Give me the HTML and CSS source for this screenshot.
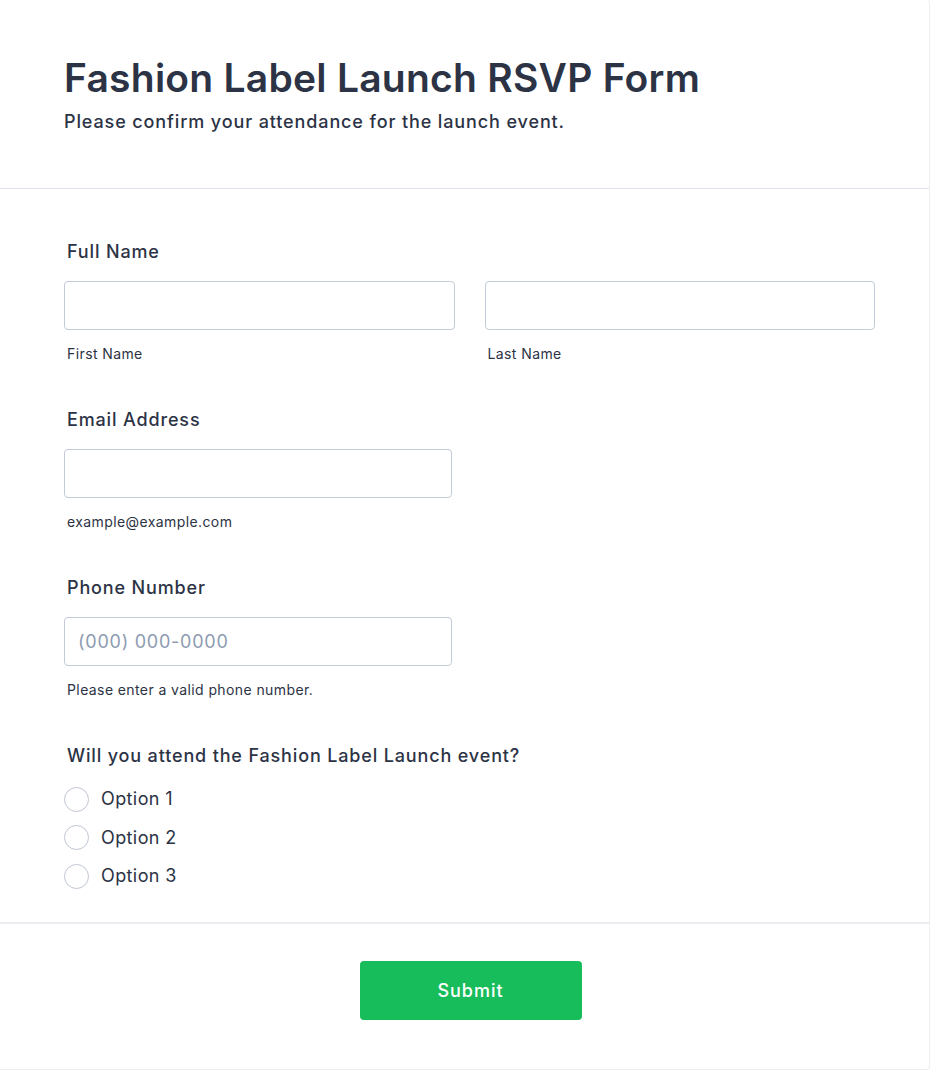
FILE: index.html
```html
<!DOCTYPE html>
<html lang="en">
<head>
<meta charset="utf-8">
<title>Fashion Label Launch RSVP Form</title>
<link rel="stylesheet" href="styles.css">
</head>
<body>
<div class="card">
  <header class="header">
    <h1 class="title">Fashion Label Launch RSVP Form</h1>
    <p class="subtitle">Please confirm your attendance for the launch event.</p>
  </header>
  <form class="form">
    <div class="field">
      <label class="label">Full Name</label>
      <div class="name-row">
        <div class="sub-field">
          <input class="input" type="text">
          <span class="sublabel">First Name</span>
        </div>
        <div class="sub-field">
          <input class="input" type="text">
          <span class="sublabel">Last Name</span>
        </div>
      </div>
    </div>
    <div class="field">
      <label class="label">Email Address</label>
      <div class="sub-field half">
        <input class="input" type="email">
        <span class="sublabel">example@example.com</span>
      </div>
    </div>
    <div class="field">
      <label class="label">Phone Number</label>
      <div class="sub-field half">
        <input class="input" type="tel" placeholder="(000) 000-0000">
        <span class="sublabel">Please enter a valid phone number.</span>
      </div>
    </div>
    <div class="field">
      <label class="label">Will you attend the Fashion Label Launch event?</label>
      <div class="options">
        <label class="option"><span class="radio"></span><span>Option 1</span></label>
        <label class="option"><span class="radio"></span><span>Option 2</span></label>
        <label class="option"><span class="radio"></span><span>Option 3</span></label>
      </div>
    </div>
  </form>
  <footer class="footer">
    <button class="submit" type="button">Submit</button>
  </footer>
</div>
</body>
</html>
```
FILE: styles.css
```css
* { box-sizing: border-box; }
html, body { margin: 0; padding: 0; background: #ffffff; }
body {
  font-family: Inter, "Noto Sans", sans-serif;
  color: #2c3345;
}
.card {
  width: 930px;
  height: 1070px;
  border-right: 1px solid #ededf2;
  border-bottom: 1px solid #ededf2;
  border-top-right-radius: 4px;
  border-bottom-right-radius: 4px;
  display: flex;
  flex-direction: column;
}
.header {
  padding: 54px 64px 54px;
  border-bottom: 1px solid #e1e2ec;
}
.title {
  margin: 0;
  font-size: 39px;
  line-height: 48px;
  font-weight: 600;
  letter-spacing: 0.25px;
  color: #2c3345;
}
.subtitle {
  margin: 8px 0 0;
  font-size: 18px;
  line-height: 24px;
  font-weight: 500;
  letter-spacing: 0.88px;
  color: #2c3345;
}
.form {
  padding: 51px 54px 0 64px;
  display: flex;
  flex-direction: column;
  gap: 45px;
}
.field { display: flex; flex-direction: column; }
.label {
  font-size: 18px;
  line-height: 24px;
  font-weight: 500;
  letter-spacing: 0.85px;
  padding-left: 3px;
  margin-bottom: 17px;
}
.name-row {
  display: flex;
  gap: 30px;
}
.sub-field {
  display: flex;
  flex-direction: column;
  flex: 1;
}
.sub-field.half { width: 388px; flex: none; }
.input {
  height: 49px;
  width: 100%;
  border: 1px solid #c3cad8;
  border-radius: 4px;
  padding: 0 13px;
  font-family: Inter, "Noto Sans", sans-serif;
  font-size: 18px;
  letter-spacing: 0.75px;
  color: #2c3345;
  background: #fff;
  outline: none;
}
.input::placeholder { color: #8d9bb1; }
.sublabel {
  margin-top: 15px;
  padding-left: 3px;
  font-size: 14px;
  line-height: 18px;
  letter-spacing: 0.4px;
  color: #2c3345;
}
.options {
  display: flex;
  flex-direction: column;
  gap: 14.5px;
  margin-top: 2px;
}
.option {
  display: flex;
  align-items: center;
  gap: 12px;
  height: 24px;
  font-size: 18px;
  line-height: 24px;
  letter-spacing: 0.4px;
}
.radio {
  width: 25px;
  height: 25px;
  border-radius: 50%;
  border: 1.5px solid #c0c6d2;
  background: #fff;
  flex: none;
}
.footer {
  margin-top: 34px;
  border-top: 2px solid #ececf1;
  padding-top: 37px;
  padding-left: 12px;
  display: flex;
  justify-content: center;
}
.submit {
  width: 222px;
  height: 59px;
  border: none;
  border-radius: 4px;
  background: #18bd5b;
  color: #ffffff;
  font-family: Inter, "Noto Sans", sans-serif;
  font-size: 18px;
  font-weight: 500;
  letter-spacing: 1px;
}
```
